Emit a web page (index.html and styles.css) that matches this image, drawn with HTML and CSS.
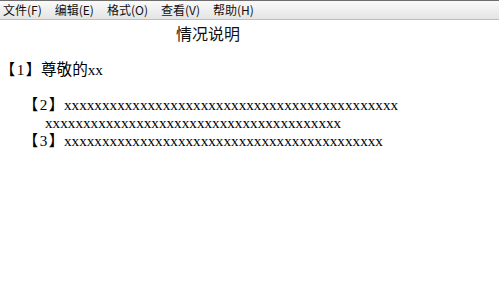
FILE: index.html
```html
<!DOCTYPE html>
<html lang="zh-CN">
<head>
    <meta charset="UTF-8">
    <title>情况说明</title>
    <link rel="stylesheet" href="styles.css">
</head>
<body>
    <div class="menubar">
        <span class="menu-item">文件(F)</span>
        <span class="menu-item">编辑(E)</span>
        <span class="menu-item">格式(O)</span>
        <span class="menu-item">查看(V)</span>
        <span class="menu-item">帮助(H)</span>
    </div>
    <div class="doc">
        <div class="title">情况说明</div>
        <p class="line first"><span class="lb">【</span>1<span class="rb">】</span><span class="cjk">尊敬的</span>xx</p>
        <div class="items">
            <p class="line item"><span class="lb">【</span>2<span class="rb">】</span>xxxxxxxxxxxxxxxxxxxxxxxxxxxxxxxxxxxxxxxxxxxx<br>xxxxxxxxxxxxxxxxxxxxxxxxxxxxxxxxxxxxxxx</p>
            <p class="line item"><span class="lb">【</span>3<span class="rb">】</span>xxxxxxxxxxxxxxxxxxxxxxxxxxxxxxxxxxxxxxxxxx</p>
        </div>
    </div>
</body>
</html>
```

FILE: styles.css
```css
body {
    margin: 0;
    padding: 0;
    background-color: white;
    font-family: "Liberation Serif", "Noto Sans CJK SC", serif;
    color: #000;
}
.menubar {
    display: flex;
    height: 18px;
    border-top: 1px solid #6e6e6e;
    border-bottom: 1px solid #a6c2e2;
    background: linear-gradient(#fafafa, #e4e4e4);
    font-family: "Noto Sans CJK SC", sans-serif;
    font-size: 12px;
    line-height: 18px;
    color: #111;
    padding-left: 3px;
}
.menu-item {
    margin-right: 13px;
}
.doc {
    padding-top: 4px;
}
.title {
    font-family: "Noto Sans CJK SC", sans-serif;
    font-size: 16px;
    line-height: 18px;
    padding-left: 176px;
    color: #111;
}
.line {
    margin: 0;
    font-size: 15.2px;
    line-height: 18px;
}
.lb {
    margin-right: 1.5px;
}
.rb {
    margin-left: 1.5px;
}
.cjk {
    font-size: 15.6px;
}
.first {
    margin-top: 19px;
}
.items {
    margin-top: 17px;
}
.item {
    padding-left: 45px;
    text-indent: -22px;
}
```
